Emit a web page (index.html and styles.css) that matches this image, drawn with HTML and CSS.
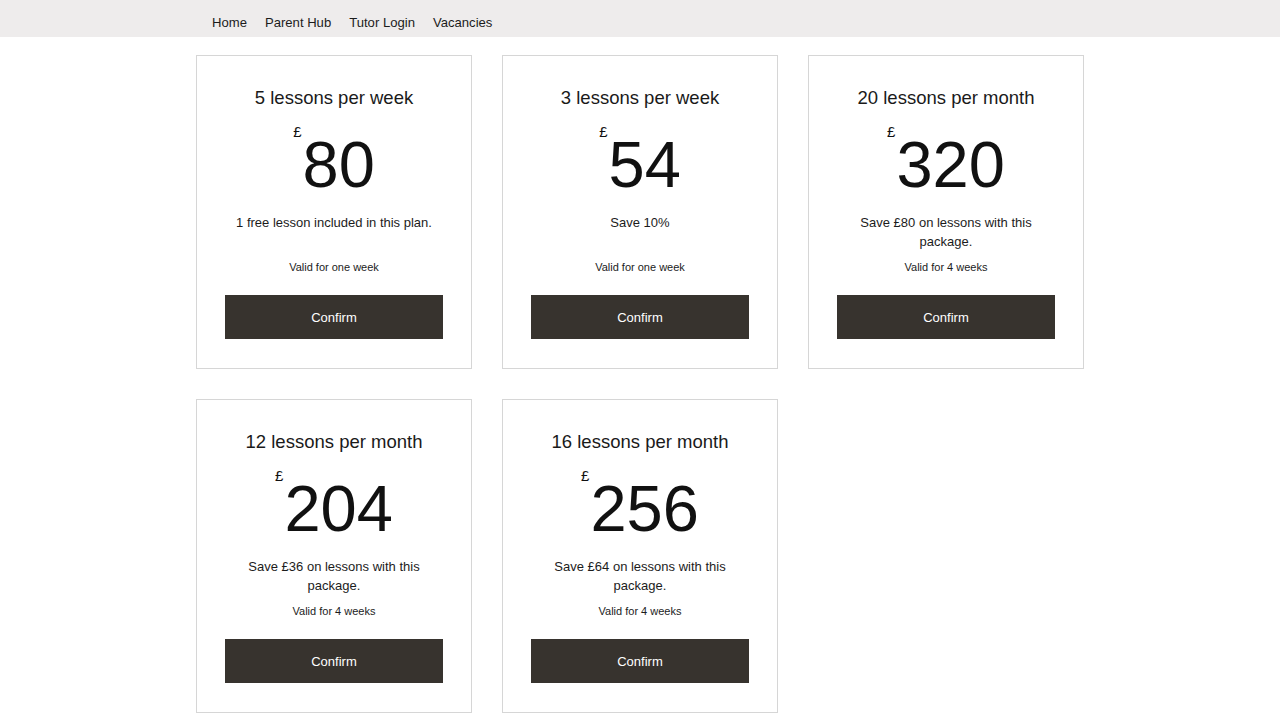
FILE: index.html
```html
<!DOCTYPE html>
<html lang="en">
<head>
    <meta charset="UTF-8">
    <meta name="viewport" content="width=device-width, initial-scale=1.0">
    <title>Lesson Packages</title>
    <link rel="stylesheet" href="styles.css">
</head>
<body>
    <!-- Header -->
    <header class="header">
        <nav class="nav-links">
            <a href="#">Home</a>
            <a href="#">Parent Hub</a>
            <a href="#">Tutor Login</a>
            <a href="#">Vacancies</a>
        </nav>
    </header>

    <!-- Packages -->
    <main class="packages">
        <div class="package-card">
            <h2 class="package-title">5 lessons per week</h2>
            <div class="price"><span class="currency">£</span><span class="amount">80</span></div>
            <p class="package-desc">1 free lesson included in this plan.</p>
            <p class="package-valid">Valid for one week</p>
            <button class="confirm-button">Confirm</button>
        </div>

        <div class="package-card">
            <h2 class="package-title">3 lessons per week</h2>
            <div class="price"><span class="currency">£</span><span class="amount">54</span></div>
            <p class="package-desc">Save 10%</p>
            <p class="package-valid">Valid for one week</p>
            <button class="confirm-button">Confirm</button>
        </div>

        <div class="package-card">
            <h2 class="package-title">20 lessons per month</h2>
            <div class="price"><span class="currency">£</span><span class="amount">320</span></div>
            <p class="package-desc">Save £80 on lessons with this package.</p>
            <p class="package-valid">Valid for 4 weeks</p>
            <button class="confirm-button">Confirm</button>
        </div>

        <div class="package-card">
            <h2 class="package-title">12 lessons per month</h2>
            <div class="price"><span class="currency">£</span><span class="amount">204</span></div>
            <p class="package-desc">Save £36 on lessons with this package.</p>
            <p class="package-valid">Valid for 4 weeks</p>
            <button class="confirm-button">Confirm</button>
        </div>

        <div class="package-card">
            <h2 class="package-title">16 lessons per month</h2>
            <div class="price"><span class="currency">£</span><span class="amount">256</span></div>
            <p class="package-desc">Save £64 on lessons with this package.</p>
            <p class="package-valid">Valid for 4 weeks</p>
            <button class="confirm-button">Confirm</button>
        </div>
    </main>
</body>
</html>
```

FILE: styles.css
```css
/* Reset */
* {
    margin: 0;
    padding: 0;
    box-sizing: border-box;
}

body {
    font-family: "Liberation Sans", Arial, Helvetica, sans-serif;
    background-color: #fff;
    color: #1c1c1c;
}

/* Header */
.header {
    width: 100%;
    height: 37px;
    background-color: #eeecec;
    padding-top: 15px;
}

.nav-links {
    width: 888px;
    margin: 0 auto;
    padding-left: 16px;
    display: flex;
    gap: 18px;
}

.nav-links a {
    color: #1c1c1c;
    text-decoration: none;
    font-size: 13.1px;
    line-height: 16px;
}

/* Packages grid */
.packages {
    display: grid;
    grid-template-columns: repeat(3, 276px);
    gap: 30px;
    justify-content: center;
    margin-top: 18px;
    padding-bottom: 30px;
}

.package-card {
    border: 1px solid #d6d6d6;
    padding: 28px 28px 29px;
    text-align: center;
    display: flex;
    flex-direction: column;
}

.package-title {
    font-size: 18.5px;
    font-weight: normal;
    line-height: 28px;
    color: #1a1a1a;
}

/* Price */
.price {
    display: flex;
    justify-content: center;
    align-items: flex-start;
    margin-top: 21px;
    color: #111;
}

.currency {
    font-size: 15px;
    line-height: 15px;
    margin-top: -9px;
    margin-right: 1px;
}

.amount {
    font-size: 65px;
    line-height: 64px;
}

.package-desc {
    margin-top: 16px;
    font-size: 13px;
    line-height: 19px;
    min-height: 38px;
}

.package-valid {
    margin-top: 8px;
    font-size: 11px;
    line-height: 16px;
}

.confirm-button {
    margin-top: 20px;
    height: 44px;
    width: 100%;
    border: none;
    background-color: #37332e;
    color: #fff;
    font-family: inherit;
    font-size: 13px;
    cursor: pointer;
}
```
